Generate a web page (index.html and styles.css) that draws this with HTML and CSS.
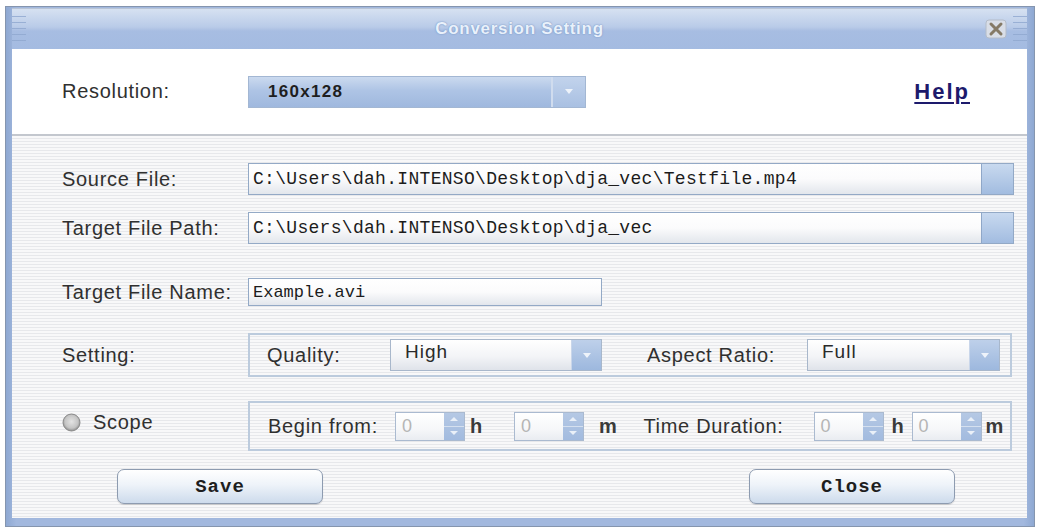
FILE: index.html
```html
<!DOCTYPE html>
<html lang="en">
<head>
  <meta charset="UTF-8">
  <title>Conversion Setting</title>
  <link rel="stylesheet" href="styles.css">
</head>
<body>
  <div class="window">
    <!-- Title bar -->
    <div class="titlebar">
      <div class="title-left"><div class="grip"></div></div>
      <div class="title">Conversion Setting</div>
      <div class="title-right">
        <svg class="close-icon" width="22" height="20" viewBox="0 0 22 20">
          <rect x="1" y="1" width="20" height="18" rx="3" fill="#d9dee7" stroke="#b4bcc8"/>
          <path d="M6 5 L16 15 M16 5 L6 15" stroke="#857a66" stroke-width="3" stroke-linecap="round"/>
        </svg>
        <div class="grip"></div>
      </div>
    </div>

    <!-- Resolution and help link -->
    <div class="top-panel">
      <span class="label">Resolution:</span>
      <div class="combo combo-blue">
        <span class="combo-text">160x128</span>
        <span class="combo-arrow">
          <svg width="8" height="5" viewBox="0 0 8 5"><polygon points="0,0 8,0 4,5" fill="#eef3fa"/></svg>
        </span>
      </div>
      <a class="help" href="#">Help</a>
    </div>

    <!-- Conversion options -->
    <div class="main-panel">
      <div class="row row-source">
        <span class="label">Source File:</span>
        <div class="path-field">
          <span class="path-text">C:\Users\dah.INTENSO\Desktop\dja_vec\Testfile.mp4</span>
          <span class="browse"></span>
        </div>
      </div>

      <div class="row row-target">
        <span class="label">Target File Path:</span>
        <div class="path-field">
          <span class="path-text">C:\Users\dah.INTENSO\Desktop\dja_vec</span>
          <span class="browse"></span>
        </div>
      </div>

      <div class="row row-name">
        <span class="label">Target File Name:</span>
        <div class="name-field"><span class="path-text">Example.avi</span></div>
      </div>

      <div class="row row-setting">
        <span class="label">Setting:</span>
        <div class="group">
          <span class="label quality-label">Quality:</span>
          <div class="combo combo-quality">
            <span class="combo-text">High</span>
            <span class="combo-arrow">
              <svg width="8" height="5" viewBox="0 0 8 5"><polygon points="0,0 8,0 4,5" fill="#eef3fa"/></svg>
            </span>
          </div>
          <span class="label aspect-label">Aspect Ratio:</span>
          <div class="combo combo-aspect">
            <span class="combo-text">Full</span>
            <span class="combo-arrow">
              <svg width="8" height="5" viewBox="0 0 8 5"><polygon points="0,0 8,0 4,5" fill="#eef3fa"/></svg>
            </span>
          </div>
        </div>
      </div>

      <div class="row row-scope">
        <label class="label scope-label">
          <svg class="radio" width="19" height="19" viewBox="0 0 19 19">
            <defs>
              <radialGradient id="rg" cx="50%" cy="45%" r="55%">
                <stop offset="0" stop-color="#e4e4e4"/>
                <stop offset="0.7" stop-color="#c4c4c4"/>
                <stop offset="1" stop-color="#8c8c8c"/>
              </radialGradient>
            </defs>
            <circle cx="9.5" cy="9.5" r="8.5" fill="url(#rg)" stroke="#8a8a8a"/>
          </svg>
          Scope
        </label>
        <div class="group group-scope">
          <span class="label">Begin from:</span>
          <div class="spinner sp-begin-h"><span class="spin-value">0</span><span class="spin-btn"><i class="up"></i><i class="down"></i></span></div>
          <span class="label unit unit-h1">h</span>
          <div class="spinner sp-begin-m"><span class="spin-value">0</span><span class="spin-btn"><i class="up"></i><i class="down"></i></span></div>
          <span class="label unit unit-m1">m</span>
          <span class="label duration-label">Time Duration:</span>
          <div class="spinner sp-dur-h"><span class="spin-value">0</span><span class="spin-btn"><i class="up"></i><i class="down"></i></span></div>
          <span class="label unit unit-h2">h</span>
          <div class="spinner sp-dur-m"><span class="spin-value">0</span><span class="spin-btn"><i class="up"></i><i class="down"></i></span></div>
          <span class="label unit unit-m2">m</span>
        </div>
      </div>

      <div class="buttons">
        <button class="btn">Save</button>
        <button class="btn">Close</button>
      </div>
    </div>
  </div>
</body>
</html>
```

FILE: styles.css
```css
/* Page */
body {
  margin: 0;
  background: #fff;
  font-family: "Liberation Sans", Arial, sans-serif;
}

/* Window frame */
.window {
  box-sizing: border-box;
  width: 1030px;
  height: 521px;
  margin: 6px 0 0 5px;
  padding: 1px 7px 8px 6px;
  border: 1px solid #8595ae;
  background: linear-gradient(to right, #8ea8d2, #a2b8de 1%, #a2b8de 99%, #8ea8d2);
  display: flex;
  flex-direction: column;
}

/* Title bar */
.titlebar {
  height: 40px;
  display: grid;
  grid-template-columns: 1fr auto 1fr;
  align-items: center;
  background: linear-gradient(#d6e1f1, #b9cbe8 45%, #a7bde2 55%, #a4bbe1);
  border-top: 1px solid #b8c4d6;
}
.title {
  font-weight: bold;
  font-size: 17px;
  letter-spacing: 0.7px;
  color: #e9f1fb;
  text-shadow: 0 0 2px #7d9bc9, 0 0 1px #7d9bc9;
}
.title-left {
  display: flex;
}
.title-right {
  display: flex;
  align-items: center;
  justify-content: flex-end;
  gap: 6px;
}
.grip {
  width: 14px;
  height: 26px;
  background: repeating-linear-gradient(#8fa7cf 0 1px, transparent 1px 6px);
  opacity: 0.8;
}
.close-icon {
  display: block;
}

/* Common label */
.label {
  font-size: 20px;
  letter-spacing: 0.7px;
  color: #303030;
  white-space: nowrap;
}

/* Top white panel */
.top-panel {
  height: 85px;
  background: #fff;
  display: flex;
  align-items: center;
  padding: 0 57px 0 50px;
}
.top-panel > .label {
  width: 186px;
  flex: none;
}
.help {
  margin-left: auto;
  font-size: 22px;
  font-weight: bold;
  letter-spacing: 2px;
  color: #1d1a6c;
  text-decoration: underline;
  text-decoration-thickness: 2px;
  text-underline-offset: 3px;
}

/* Combo boxes */
.combo {
  box-sizing: border-box;
  height: 32px;
  display: flex;
  align-items: center;
  border: 1px solid #a8b7cb;
  background: linear-gradient(#ffffff, #f3f4f7 55%, #dfe3ea);
}
.combo-text {
  flex: 1;
  padding-left: 14px;
  font-size: 19px;
  letter-spacing: 1px;
  color: #2a2a2a;
  margin-top: -6px;
}
.combo-arrow {
  width: 29px;
  align-self: stretch;
  display: flex;
  align-items: center;
  justify-content: center;
  background: linear-gradient(#bed0ea, #9db8de);
  border-left: 1px solid #c9d6ea;
}
.combo-blue {
  width: 338px;
  border-color: #a3b7d3;
  background: linear-gradient(#cbdaef, #aec4e5 45%, #9fb8de);
}
.combo-blue .combo-text {
  padding-left: 19px;
  font-size: 17px;
  font-weight: bold;
  letter-spacing: 1.3px;
  color: #1e1e1e;
  margin-top: 0;
}
.combo-blue .combo-arrow {
  width: 32px;
  background: linear-gradient(#c2d3ec, #a9c0e2);
  border-left: 2px solid #d0dcee;
}
.combo-quality {
  width: 212px;
}
.combo-aspect {
  width: 193px;
}

/* Striped lower panel */
.main-panel {
  flex: 1;
  border-top: 2px solid #c3c7ce;
  background: repeating-linear-gradient(#f8f8f9 0 2px, #e7e8eb 2px 3px);
  padding: 27px 13px 0 50px;
  display: flex;
  flex-direction: column;
}
.row {
  display: flex;
  align-items: center;
}
.row > .label {
  width: 186px;
  flex: none;
}
.row-source { height: 32px; }
.row-target { height: 32px; margin-top: 17px; }
.row-name { height: 28px; margin-top: 34px; }
.row-setting { height: 44px; margin-top: 27px; }
.row-scope { height: 50px; margin-top: 24px; }

/* Text fields */
.path-field,
.name-field {
  box-sizing: border-box;
  height: 100%;
  display: flex;
  align-items: center;
  border: 1px solid #93a9c6;
  background: linear-gradient(#ffffff, #fbfbfc 50%, #e2e6ec);
}
.path-field {
  flex: 1;
}
.name-field {
  width: 354px;
}
.path-text {
  flex: 1;
  padding-left: 4px;
  font-family: "Liberation Mono", "Courier New", monospace;
  font-size: 18px;
  letter-spacing: 0.3px;
  color: #1c1c1c;
}
.name-field .path-text {
  font-size: 17px;
  letter-spacing: 0;
}
.browse {
  width: 31px;
  align-self: stretch;
  background: linear-gradient(#c8d9ef, #a2bce0);
  border-left: 1px solid #8fa7c8;
}

/* Group boxes */
.group {
  box-sizing: border-box;
  flex: 1;
  height: 100%;
  margin-right: 2px;
  border: 2px solid #bccbdd;
  display: flex;
  align-items: center;
  padding-left: 17px;
}
.quality-label {
  width: 123px;
}
.aspect-label {
  width: 160px;
  margin-left: 45px;
}
.group-scope {
  padding-left: 18px;
}

/* Scope radio */
.scope-label {
  display: flex;
  align-items: center;
  gap: 12px;
  margin-bottom: 8px;
}
.radio {
  display: block;
}

/* Spinners */
.spinner {
  box-sizing: border-box;
  width: 70px;
  height: 29px;
  display: flex;
  border: 1px solid #aabad0;
  background: linear-gradient(#ffffff, #f6f7f9 60%, #e9ecf1);
}
.spin-value {
  flex: 1;
  padding-left: 6px;
  font-size: 18px;
  line-height: 27px;
  color: #b5b5b5;
}
.spin-btn {
  width: 20px;
  display: flex;
  flex-direction: column;
  background: linear-gradient(#b5c8e4, #a2bbdf);
}
.spin-btn i {
  flex: 1;
  display: flex;
  align-items: center;
  justify-content: center;
}
.spin-btn i::before {
  content: "";
  border-left: 4px solid transparent;
  border-right: 4px solid transparent;
}
.spin-btn .up {
  border-bottom: 1px solid #d5e0ef;
}
.spin-btn .up::before {
  border-bottom: 4px solid #eaf0f8;
}
.spin-btn .down::before {
  border-top: 4px solid #eaf0f8;
}
.sp-begin-h { margin-left: 17px; }
.unit-h1 { margin-left: 5px; }
.sp-begin-m { margin-left: 31px; }
.unit-m1 { margin-left: 15px; }
.duration-label { margin-left: 26px; }
.sp-dur-h { margin-left: 30px; }
.unit-h2 { margin-left: 8px; }
.sp-dur-m { margin-left: 7px; }
.unit-m2 { margin-left: 4px; }
.unit {
  font-weight: bold;
  color: #3a3a3a;
}

/* Bottom buttons */
.buttons {
  margin-top: 18px;
  display: flex;
  justify-content: space-between;
  padding: 0 59px 0 55px;
}
.btn {
  width: 206px;
  height: 35px;
  border: 1px solid #8d9bb0;
  border-radius: 7px;
  background: linear-gradient(#ffffff, #eef3f9 45%, #cddbec);
  box-shadow: 0 1px 1px rgba(0, 0, 0, 0.15);
  font-family: "Liberation Mono", "Courier New", monospace;
  font-weight: bold;
  font-size: 19px;
  letter-spacing: 1px;
  color: #1e1e1e;
  cursor: pointer;
}
```
